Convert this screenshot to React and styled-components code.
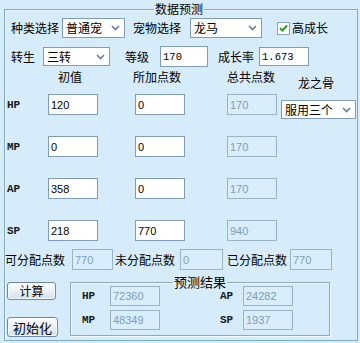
import React from 'react';
import styled, { createGlobalStyle } from 'styled-components';

const GlobalStyle = createGlobalStyle`
  html, body { margin: 0; padding: 0; background: #d6ecfa; }
  body {
    width: 360px; height: 343px; overflow: hidden;
    font-family: "Noto Sans CJK SC", "Noto Sans", sans-serif;
    font-size: 12px; color: #000;
  }
  * { box-sizing: border-box; }
`;

const Page = styled.div`
  width: 360px;
  padding: 1px 2px 0 4px;
`;

const Panel = styled.fieldset`
  margin: 0;
  padding: 0 0 3px 0;
  min-width: 0;
  border: 1px solid #7eaac4;
  box-shadow: inset 1px 1px 0 #eef7fd;
  display: flex;
  flex-direction: column;
`;

const PanelLegend = styled.legend`
  margin-left: 149px;
  padding: 0 1px;
  font-size: 12px;
  line-height: 16px;
`;

const Row = styled.div`
  display: flex;
  align-items: center;
  height: ${p => p.$h}px;
  margin-top: ${p => p.$mt}px;
`;

const Label = styled.span`
  margin-left: ${p => p.$ml || 0}px;
  white-space: nowrap;
  line-height: 14px;
`;

const SelectBox = styled.div`
  display: flex;
  align-items: center;
  width: ${p => p.$w}px;
  height: ${p => p.$h || 20}px;
  margin-left: ${p => p.$ml || 0}px;
  margin-top: ${p => p.$mt || 0}px;
  align-self: ${p => (p.$mt ? 'start' : 'auto')};
  background: #fff;
  border: 1px solid #7f9db9;
`;

const SelectText = styled.span`
  flex: 1;
  min-width: 0;
  overflow: hidden;
  white-space: nowrap;
  padding-left: 3px;
  line-height: 16px;
`;

const ArrowCell = styled.span`
  width: 17px;
  height: 100%;
  display: flex;
  align-items: center;
  justify-content: center;
`;

const Input = styled.input`
  width: ${p => p.$w}px;
  height: ${p => p.$h || 21}px;
  margin: 0 0 0 ${p => p.$ml || 0}px;
  padding: 0 0 0 2px;
  border: 1px solid ${p => (p.$off ? '#9ab3c5' : '#7f9db9')};
  background: ${p => (p.$off ? '#d9edfa' : '#fff')};
  color: ${p => (p.$off ? '#7d9fba' : '#000')};
  font-family: ${p => (p.$mono ? '"Liberation Mono", monospace' : '"Liberation Sans", Arial, sans-serif')};
  font-size: ${p => (p.$mono ? '10.5px' : '11px')};
  outline: none;
`;

const CheckBox = styled.span`
  width: 13px;
  height: 13px;
  margin-left: ${p => p.$ml || 0}px;
  border: 1px solid #8ea4b8;
  background: #fff;
  display: flex;
  align-items: center;
  justify-content: center;
`;

const HeaderGrid = styled.div`
  display: grid;
  grid-template-columns: 43px 87px 92px 54px 75px;
  height: 25px;
  margin-top: 2px;
  align-items: start;
`;

const HeadText = styled.span`
  grid-column: ${p => p.$col};
  margin-left: ${p => p.$ml || 0}px;
  margin-top: ${p => p.$mt || 1}px;
  line-height: 14px;
  white-space: nowrap;
`;

const DataGrid = styled.div`
  display: grid;
  grid-template-columns: 43px 87px 92px 54px 75px;
  grid-auto-rows: 21px;
  row-gap: 21px;
  align-items: center;
`;

const StatLabel = styled.span`
  margin-left: ${p => p.$ml ?? 2}px;
  font-family: "Liberation Mono", monospace;
  font-weight: bold;
  font-size: 11px;
  color: #1a1a1a;
`;

const PointsRow = styled.div`
  display: grid;
  grid-template-columns: 67px 43px 65px 47px 63px 42px;
  align-items: center;
  height: 21px;
  margin-top: 8px;
`;

const Bottom = styled.div`
  display: flex;
  align-items: flex-start;
  margin-top: 5px;
  padding-left: 2px;
`;

const ButtonCol = styled.div`
  display: flex;
  flex-direction: column;
  align-items: flex-start;
  gap: 17px;
  margin-top: 7px;
  width: 51px;
`;

const Button = styled.button`
  width: ${p => p.$w}px;
  height: ${p => p.$h}px;
  padding: 0;
  border: 1px solid #6c8aa3;
  border-radius: 3px;
  background: linear-gradient(#ffffff, #e8eff6 55%, #d3dfea);
  box-shadow: inset 0 0 0 1px #f7fbff;
  font-family: "Noto Sans CJK SC", sans-serif;
  font-size: ${p => p.$fs}px;
  line-height: 1;
  color: #000;
`;

const Result = styled.fieldset`
  margin: 0 0 0 12px;
  padding: 0;
  min-width: 0;
  width: 260px;
  height: 61px;
  border: 1px solid #93a9b8;
  box-shadow: inset 1px 1px 0 #f2f9fe, 1px 1px 0 #f2f9fe;
`;

const ResultLegend = styled.legend`
  margin: 0 auto -3px;
  padding: 0 1px;
  font-size: 13px;
  line-height: 14px;
`;

const ResultGrid = styled.div`
  display: grid;
  grid-template-columns: 39px 110px 23px 50px;
  grid-auto-rows: 20px;
  row-gap: 4px;
  align-items: center;
`;

const Chevron = () => (
  <svg width="9" height="6" viewBox="0 0 9 6">
    <path d="M1 1 L4.5 4.5 L8 1" fill="none" stroke="#5f7fa6" strokeWidth="1.6" />
  </svg>
);

const Select = ({ text, ...rest }) => (
  <SelectBox {...rest}>
    <SelectText>{text}</SelectText>
    <ArrowCell><Chevron /></ArrowCell>
  </SelectBox>
);

const stats = [
  { k: 'HP', base: '120', add: '0', total: '170' },
  { k: 'MP', base: '0', add: '0', total: '170' },
  { k: 'AP', base: '358', add: '0', total: '170' },
  { k: 'SP', base: '218', add: '770', total: '940' },
];

export default function App() {
  return (
    <>
      <GlobalStyle />
      <Page>
        <Panel>
          <PanelLegend>数据预测</PanelLegend>
          <Row $h={20} $mt={1}>
            <Label $ml={6}>种类选择</Label>
            <Select $ml={3} $w={63} text="普通宠" />
            <Label $ml={8}>宠物选择</Label>
            <Select $ml={9} $w={72} text="龙马" />
            <CheckBox $ml={15}>
              <svg width="9" height="8" viewBox="0 0 9 8">
                <path d="M1 4 L3.5 6.5 L8 1.5" fill="none" stroke="#21a121" strokeWidth="2" />
              </svg>
            </CheckBox>
            <Label $ml={2}>高成长</Label>
          </Row>
          <Row $h={21} $mt={8}>
            <Label $ml={6}>转生</Label>
            <Select $ml={8} $w={67} $h={19} text="三转" />
            <Label $ml={15}>等级</Label>
            <Input $ml={11} $w={48} $mono defaultValue="170" readOnly />
            <Label $ml={10}>成长率</Label>
            <Input $ml={5} $w={50} $h={19} $mono defaultValue="1.673" readOnly />
          </Row>
          <HeaderGrid>
            <HeadText $col={2} $ml={10}>初值</HeadText>
            <HeadText $col={3} $ml={-2}>所加点数</HeadText>
            <HeadText $col={4}>总共点数</HeadText>
            <HeadText $col={5} $ml={17} $mt={7}>龙之骨</HeadText>
          </HeaderGrid>
          <DataGrid>
            {stats.map((s, i) => (
              <React.Fragment key={s.k}>
                <StatLabel>{s.k}</StatLabel>
                <Input $w={50} defaultValue={s.base} readOnly />
                <Input $w={50} defaultValue={s.add} readOnly />
                <Input $w={50} $off defaultValue={s.total} readOnly />
                {i === 0 ? <Select $w={75} $h={19} $mt={6} text="服用三个" /> : <span />}
              </React.Fragment>
            ))}
          </DataGrid>
          <PointsRow>
            <Label>可分配点数</Label>
            <Input $w={41} $off defaultValue="770" readOnly />
            <Label>未分配点数</Label>
            <Input $w={43} $off defaultValue="0" readOnly />
            <Label>已分配点数</Label>
            <Input $w={42} $off defaultValue="770" readOnly />
          </PointsRow>
          <Bottom>
            <ButtonCol>
              <Button $w={49} $h={18} $fs={12}>计算</Button>
              <Button $w={51} $h={20} $fs={13}>初始化</Button>
            </ButtonCol>
            <Result>
              <ResultLegend>预测结果</ResultLegend>
              <ResultGrid>
                <StatLabel $ml={11}>HP</StatLabel>
                <Input $w={50} $h={20} $off defaultValue="72360" readOnly />
                <StatLabel $ml={0}>AP</StatLabel>
                <Input $w={50} $h={20} $off defaultValue="24282" readOnly />
                <StatLabel $ml={11}>MP</StatLabel>
                <Input $w={50} $h={20} $off defaultValue="48349" readOnly />
                <StatLabel $ml={0}>SP</StatLabel>
                <Input $w={50} $h={20} $off defaultValue="1937" readOnly />
              </ResultGrid>
            </Result>
          </Bottom>
        </Panel>
      </Page>
    </>
  );
}
